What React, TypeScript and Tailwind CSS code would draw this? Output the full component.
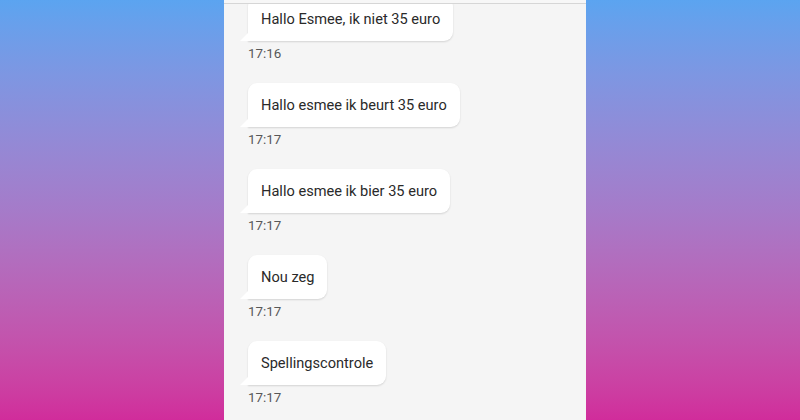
const messages = [
  { text: "Hallo Esmee, ik niet 35 euro", time: "17:16" },
  { text: "Hallo esmee ik beurt 35 euro", time: "17:17" },
  { text: "Hallo esmee ik bier 35 euro", time: "17:17" },
  { text: "Nou zeg", time: "17:17" },
  { text: "Spellingscontrole", time: "17:17" },
];

function Bubble({ text }: { text: string }) {
  return (
    <div className="relative self-start">
      <div className="rounded-[9px] rounded-bl-none bg-white px-[13px] py-[12px] text-[14.6px] leading-[20px] text-[#2a2a2a] shadow-[0_1px_2px_rgba(0,0,0,0.14)]">
        {text}
      </div>
      <svg
        className="absolute bottom-0 left-[-8px]"
        width="9"
        height="9"
        viewBox="0 0 9 9"
      >
        <path d="M0 9 L9 9 L9 0 Z" fill="#ffffff" />
      </svg>
    </div>
  );
}

export default function App() {
  return (
    <div className="h-[420px] w-[800px] overflow-hidden bg-gradient-to-b from-[#5ba4f0] via-[#a57bc9] to-[#d12c9b] font-['Roboto',sans-serif]">
      <div className="relative ml-[224px] h-full w-[362px] overflow-hidden bg-[#f5f5f5]">
        <div className="absolute inset-x-0 top-0 z-10 h-[4px] border-b border-[#d6d6d6] bg-[#f7f7f7]" />
        <div className="mt-[-3px] flex flex-col pl-[24px]">
          {messages.map((m, i) => (
            <div key={i} className="flex flex-col">
              <Bubble text={m.text} />
              <div className="mt-[5px] mb-[21px] text-[13.4px] leading-[16px] text-[#585858]">
                {m.time}
              </div>
            </div>
          ))}
        </div>
      </div>
    </div>
  );
}
